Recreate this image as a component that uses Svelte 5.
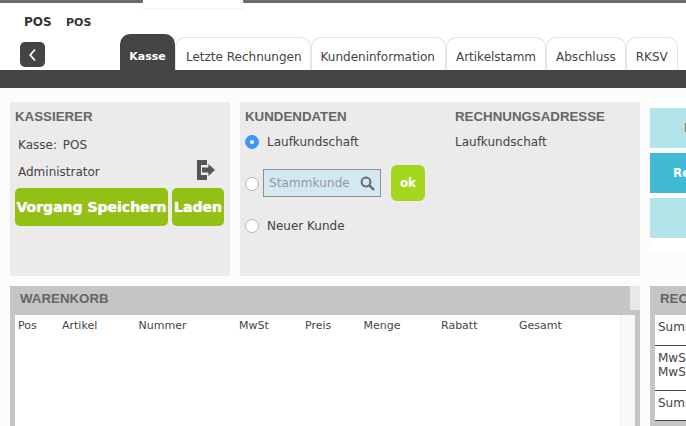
<script>
  const tabs = ['Letzte Rechnungen', 'Kundeninformation', 'Artikelstamm', 'Abschluss', 'RKSV'];
  const cols = [
    ['Pos', 44], ['Artikel', 76.5], ['Nummer', 100.5], ['MwSt', 66], ['Preis', 58.5], ['Menge', 77.5], ['Rabatt', 78], ['Gesamt', 60]
  ];
</script>

<div class="page">
  <div class="topline"><div class="notch"></div></div>
  <header class="head">
    <div class="titles"><b class="t1">POS</b><b class="t2">POS</b></div>
    <div class="navrow">
      <button class="back" aria-label="Zurück">
        <svg width="10" height="14" viewBox="0 0 10 14"><path d="M7 1.5 L2.2 7 L7 12.5" fill="none" stroke="#fff" stroke-width="1.7"/></svg>
      </button>
      <nav class="tabs">
        <div class="tab active">Kasse</div>
        {#each tabs as t}<div class="tab">{t}</div>{/each}
      </nav>
    </div>
  </header>
  <div class="darkbar"></div>

  <main class="main">
    <div class="left">
      <div class="upper">
        <section class="panel kass">
          <h2>KASSIERER</h2>
          <div class="kline first">Kasse: POS</div>
          <div class="kline admin">
            <span>Administrator</span>
            <svg width="19" height="20" viewBox="0 0 19 20"><path fill="#555" d="M0 0H10V5H4V15H10V20H0Z"/><path fill="#555" stroke="#ebebeb" stroke-width="1" d="M4.5 7H11V3L18.5 10L11 17V13H4.5Z"/></svg>
          </div>
          <div class="btns">
            <button class="green wide">Vorgang Speichern</button>
            <button class="green narrow">Laden</button>
          </div>
        </section>

        <section class="panel kund">
          <div class="kcol">
            <h2>KUNDENDATEN</h2>
            <label class="radio r1"><span class="dot on"></span>Laufkundschaft</label>
            <div class="radio r2">
              <span class="dot"></span>
              <div class="search">
                <span>Stammkunde</span>
                <svg width="15" height="15" viewBox="0 0 15 15"><circle cx="6" cy="6" r="4.4" fill="none" stroke="#666" stroke-width="2"/><path d="M9.5 9.5L14 14" stroke="#666" stroke-width="2.4"/></svg>
              </div>
              <button class="ok">ok</button>
            </div>
            <label class="radio r3"><span class="dot"></span>Neuer Kunde</label>
          </div>
          <div class="rcol">
            <h2>RECHNUNGSADRESSE</h2>
            <div class="addr">Laufkundschaft</div>
          </div>
        </section>
      </div>

      <section class="cart">
        <div class="carthead"><h2>WARENKORB</h2><div class="corner"></div></div>
        <div class="cartbody">
          <div class="cols">
            {#each cols as c}<span style="width:{c[1]}px">{c[0]}</span>{/each}
          </div>
          <div class="scroll"></div>
        </div>
      </section>
    </div>

    <div class="right">
      <div class="actions">
        <button class="act"><span class="dark">Kassieren</span></button>
        <button class="act strong">Rechnung</button>
        <button class="act"></button>
      </div>
      <section class="sum">
        <h2>RECHNUNG</h2>
        <div class="sumbody">
          <div class="srow s1">Summe</div>
          <div class="srow s2">MwSt<br />MwSt</div>
          <div class="srow s3">Summe</div>
        </div>
      </section>
    </div>
  </main>
</div>

<style>
  :global(body) { margin: 0; background: #fcfcfc; }
  .page { width: 686px; height: 426px; overflow: hidden; font-family: "DejaVu Sans", Verdana, sans-serif; font-size: 12px; color: #444; background: #fcfcfc; }
  button { font-family: inherit; border: 0; padding: 0; margin: 0; }
  h2 { margin: 0; font: bold 13.3px "Liberation Sans", Arial, sans-serif; color: #666; line-height: 16px; }

  .topline { height: 3px; background: #6b6b6b; position: relative; }
  .notch { position: absolute; left: 143px; top: 0; width: 100px; height: 8px; background: #fff; box-shadow: 0 1px 1px #f3f3f3; }
  .head { height: 67px; background: #fff; display: flex; flex-direction: column; }
  .titles { display: flex; align-items: baseline; padding: 12px 0 0 24px; height: 16px; color: #333; }
  .t1 { font-size: 12px; width: 42px; }
  .t2 { font-size: 11px; }
  .navrow { display: flex; align-items: flex-end; margin-top: 3px; flex: 1; }
  .back { width: 25px; height: 25px; margin: 0 75px 3px 20px; background: #444; border-radius: 5px; display: flex; align-items: center; justify-content: center; }
  .tabs { display: flex; align-items: flex-end; }
  .tab { height: 33px; line-height: 38px; padding: 0 9px; box-sizing: border-box; border: 1px solid #e4e4e4; border-bottom: 0; border-radius: 10px 10px 0 0; background: #fff; color: #444; white-space: nowrap; }
  .active + .tab { padding: 0 8px 0 10px; }
  .active + .tab + .tab { padding-right: 10px; }
  .tab.active { height: 36px; line-height: 46px; border: 0; background: #444; color: #fff; font-weight: bold; font-size: 11px; width: 55px; padding: 0; text-align: center; }
  .darkbar { height: 18px; background: #444; }

  .main { display: flex; gap: 10px; padding: 14px 0 0 10px; }
  .left { width: 630px; flex: none; display: flex; flex-direction: column; gap: 10px; }
  .upper { display: flex; gap: 10px; height: 174px; }
  .panel { background: #ebebeb; }

  .kass { width: 220px; padding: 7px 6px 0 5px; box-sizing: border-box; }
  .kline { padding-left: 3px; }
  .first { margin-top: 13px; word-spacing: 2px; }
  .admin { display: flex; justify-content: space-between; align-items: center; margin-top: 8px; height: 20px; padding-right: 8px; }
  .admin span { padding-top: 4px; }
  .btns { display: flex; gap: 4px; margin-top: 8px; }
  .green { height: 38px; background: #93c014; color: #fff; font-weight: bold; font-size: 14px; text-shadow: 0 0 1px #fff; border-radius: 5px; white-space: nowrap; display: flex; align-items: center; justify-content: center; }
  .wide { width: 153px; }
  .narrow { width: 52px; }

  .kund { width: 400px; display: flex; padding: 7px 0 0 5px; box-sizing: border-box; }
  .kcol { width: 210px; }
  .radio { display: flex; align-items: center; }
  .r1 { margin-top: 10px; height: 14px; }
  .r2 { margin-top: 16px; height: 36px; }
  .r3 { margin-top: 18px; height: 14px; }
  .dot { width: 12px; height: 12px; border: 1px solid #b5b5b5; border-radius: 50%; background: #fff; margin-right: 8px; flex: none; position: relative; }
  .dot.on { background: #3b97fb; border-color: #3b97fb; }
  .dot.on::after { content: ""; position: absolute; left: 4px; top: 4px; width: 4px; height: 4px; background: #fff; border-radius: 50%; }
  .r2 .dot { margin-right: 4px; margin-top: 2px; }
  .search { width: 118px; height: 28px; box-sizing: border-box; border: 1px solid #8e8e8e; background: #d3e8f0; display: flex; align-items: center; justify-content: space-between; padding: 0 5px; color: #999; letter-spacing: 0.1px; }
  .ok { width: 34px; height: 36px; margin-left: 10px; background: #a3d71f; border-radius: 6px; color: #fff; font-weight: bold; font-size: 12px; }
  .addr { margin-top: 10px; line-height: 14px; }

  .cart { background: #c4c5c4; padding: 0 5px; position: relative; height: 200px; }
  .carthead { height: 29px; display: flex; align-items: center; }
  .carthead h2 { padding-left: 5px; margin-top: -4px; }
  .corner { position: absolute; right: 0; top: 0; width: 10px; height: 24px; background: #e8e8e8; }
  .cartbody { background: #fff; height: 200px; display: flex; justify-content: space-between; }
  .cols { display: flex; padding: 4px 0 0 3px; font-size: 11px; line-height: 14px; }
  .cols span { flex: none; }
  .scroll { width: 14px; background: #f9f9f9; border-left: 1px solid #ececec; }

  .right { width: 300px; flex: none; }
  .actions { background: #fff; padding-top: 6px; height: 150px; box-sizing: border-box; display: flex; flex-direction: column; gap: 5px; margin-bottom: 34px; }
  .act { height: 40px; flex: none; background: #b3e4ea; color: #fff; font-weight: bold; font-size: 12px; width: 100%; text-align: left; padding-left: 23px; }
  .act.strong { background: #3fbad2; }
  .dark { color: #666; margin-left: 11px; }
  .sum { background: #c4c5c4; padding: 0 5px; height: 200px; }
  .sum h2 { height: 29px; line-height: 26px; padding-left: 5px; }
  .sumbody { background: #fff; }
  .srow { padding: 5px 3px 0 3px; line-height: 14px; border-bottom: 1px solid #444; box-sizing: border-box; font-size: 12px; }
  .s1 { height: 31px; }
  .s2 { height: 45px; }
  .s3 { height: 30px; }
</style>
